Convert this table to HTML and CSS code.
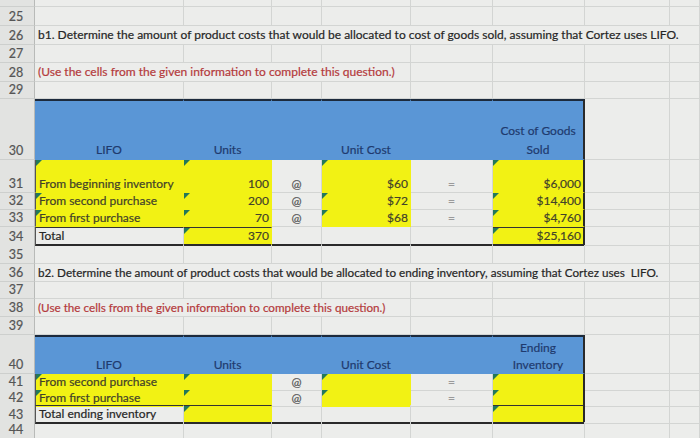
FILE: index.html
```html
<!DOCTYPE html>
<html>
<head>
<meta charset="utf-8">
<link rel="stylesheet" href="styles.css">
</head>
<body>
<div class="sheet">
  <div class="row h7"><div class="c rh"></div><div class="c"></div><div class="c"></div><div class="c"></div><div class="c"></div><div class="c"></div><div class="c"></div><div class="c"></div><div class="c"></div></div>
  <div class="row h19"><div class="c rh">25</div><div class="c"></div><div class="c"></div><div class="c"></div><div class="c"></div><div class="c"></div><div class="c"></div><div class="c"></div><div class="c"></div></div>
  <div class="row h19"><div class="c rh">26</div><div class="c ov"><span>b1. Determine the amount of product costs that would be allocated to cost of goods sold, assuming that Cortez uses LIFO.</span></div><div class="c"></div><div class="c"></div><div class="c"></div><div class="c"></div><div class="c"></div><div class="c"></div><div class="c"></div></div>
  <div class="row h18"><div class="c rh">27</div><div class="c"></div><div class="c"></div><div class="c"></div><div class="c"></div><div class="c"></div><div class="c"></div><div class="c"></div><div class="c"></div></div>
  <div class="row h19"><div class="c rh">28</div><div class="c ov red"><span>(Use the cells from the given information to complete this question.)</span></div><div class="c"></div><div class="c"></div><div class="c"></div><div class="c"></div><div class="c"></div><div class="c"></div><div class="c"></div></div>
  <div class="row h17"><div class="c rh">29</div><div class="c"></div><div class="c"></div><div class="c"></div><div class="c"></div><div class="c"></div><div class="c"></div><div class="c"></div><div class="c"></div></div>

  <div class="row h61"><div class="c rh">30</div><div class="c th">LIFO</div><div class="c th">Units</div><div class="c th"></div><div class="c th">Unit Cost</div><div class="c th"></div><div class="c th rb">Cost of Goods<br>Sold</div><div class="c"></div><div class="c"></div></div>
  <div class="row h33"><div class="c rh">31</div><div class="c y lb tri">From beginning inventory</div><div class="c y num tri">100</div><div class="c ctr at">@</div><div class="c y num tri">$60</div><div class="c ctr eq">=</div><div class="c y num tri rb">$6,000</div><div class="c"></div><div class="c"></div></div>
  <div class="row h17"><div class="c rh">32</div><div class="c y lb tri">From second purchase</div><div class="c y num tri">200</div><div class="c ctr at">@</div><div class="c y num tri">$72</div><div class="c ctr eq">=</div><div class="c y num tri rb">$14,400</div><div class="c"></div><div class="c"></div></div>
  <div class="row h17"><div class="c rh">33</div><div class="c y lb tri">From first purchase</div><div class="c y num tri">70</div><div class="c ctr at">@</div><div class="c y num tri">$68</div><div class="c ctr eq">=</div><div class="c y num tri rb">$4,760</div><div class="c"></div><div class="c"></div></div>
  <div class="row h18"><div class="c rh">34</div><div class="c lb tt bb">Total</div><div class="c y num tri tt bb">370</div><div class="c bb"></div><div class="c bb"></div><div class="c bb"></div><div class="c y num tri tt bb rb">$25,160</div><div class="c"></div><div class="c"></div></div>

  <div class="row h19"><div class="c rh">35</div><div class="c"></div><div class="c"></div><div class="c"></div><div class="c"></div><div class="c"></div><div class="c"></div><div class="c"></div><div class="c"></div></div>
  <div class="row h18"><div class="c rh">36</div><div class="c ov sm"><span>b2. Determine the amount of product costs that would be allocated to ending inventory, assuming that Cortez uses&nbsp; LIFO.</span></div><div class="c"></div><div class="c"></div><div class="c"></div><div class="c"></div><div class="c"></div><div class="c"></div><div class="c"></div></div>
  <div class="row h17"><div class="c rh">37</div><div class="c"></div><div class="c"></div><div class="c"></div><div class="c"></div><div class="c"></div><div class="c"></div><div class="c"></div><div class="c"></div></div>
  <div class="row h18"><div class="c rh">38</div><div class="c ov red sm"><span>(Use the cells from the given information to complete this question.)</span></div><div class="c"></div><div class="c"></div><div class="c"></div><div class="c"></div><div class="c"></div><div class="c"></div><div class="c"></div></div>
  <div class="row h18"><div class="c rh">39</div><div class="c"></div><div class="c"></div><div class="c"></div><div class="c"></div><div class="c"></div><div class="c"></div><div class="c"></div><div class="c"></div></div>

  <div class="row h39"><div class="c rh">40</div><div class="c th th2">LIFO</div><div class="c th th2">Units</div><div class="c th th2"></div><div class="c th th2">Unit Cost</div><div class="c th th2"></div><div class="c th th2 rb">Ending<br>Inventory</div><div class="c"></div><div class="c"></div></div>
  <div class="row h16"><div class="c rh">41</div><div class="c y lb tri">From second purchase</div><div class="c y num tri"></div><div class="c ctr at">@</div><div class="c y num tri"></div><div class="c ctr eq">=</div><div class="c y num tri rb"></div><div class="c"></div><div class="c"></div></div>
  <div class="row h15"><div class="c rh">42</div><div class="c y lb tri">From first purchase</div><div class="c y num tri"></div><div class="c ctr at">@</div><div class="c y num tri"></div><div class="c ctr eq">=</div><div class="c y num tri rb"></div><div class="c"></div><div class="c"></div></div>
  <div class="row h17"><div class="c rh">43</div><div class="c lb tt bb">Total ending inventory</div><div class="c y num tri tt bb"></div><div class="c bb"></div><div class="c bb"></div><div class="c bb"></div><div class="c y num tri tt bb rb"></div><div class="c"></div><div class="c"></div></div>
  <div class="row h16"><div class="c rh">44</div><div class="c"></div><div class="c"></div><div class="c"></div><div class="c"></div><div class="c"></div><div class="c"></div><div class="c"></div><div class="c"></div></div>
</div>
</body>
</html>
```
FILE: styles.css
```css
* { box-sizing: border-box; margin: 0; padding: 0; }
html, body { width: 700px; height: 438px; overflow: hidden; }
body {
  background: #ecedeb;
  font-family: Lato, "Open Sans", sans-serif;
  font-size: 12px;
  color: #262626;
  -webkit-text-stroke: 0.2px currentColor;
}
.sheet { display: flex; flex-direction: column; }
.row {
  display: grid;
  grid-template-columns: 35px 149px 88px 50px 89px 82px 92px 85px 1fr;
}
.h7 { height: 7px; }
.h15 { height: 15px; }
.h16 { height: 16px; }
.h17 { height: 17px; }
.h18 { height: 18px; }
.h19 { height: 19px; }
.h33 { height: 33px; }
.h39 { height: 39px; }
.h61 { height: 61px; }

.c {
  position: relative;
  display: flex;
  align-items: flex-end;
  padding: 0 3px 1px;
  line-height: 15px;
  white-space: nowrap;
  border-right: 1px solid #d3d5d3;
  border-bottom: 1px solid #d3d5d3;
}
.rh {
  background: #e2e3e1;
  justify-content: center;
  color: #555;
  font-size: 12.5px;
  padding-right: 5px;
  border-right: 1px solid #b8bab8;
  border-bottom-color: #cdcfcd;
}
.ov { z-index: 1; padding-bottom: 0; }
.ov span {
  display: inline-block;
  height: 18px;
  line-height: 18px;
  padding-right: 2px;
  background: #ecedeb;
}
.ov.sm span { height: 17px; line-height: 17px; font-size: 11.7px; }
.red { color: #b43a3c; }

.th {
  background: #5a96d6;
  border-top: 2px solid #1c2a3c;
  border-right-color: #5a96d6;
  border-bottom-color: #5a96d6;
  color: #1f3a6e;
  justify-content: center;
  text-align: center;
  line-height: 19px;
  padding-bottom: 0;
}
.th2 { line-height: 17px; }
.y {
  background: #f2f214;
  border-right-color: #f2f214;
  border-bottom-color: #f2f214;
  color: #42422a;
}
.num { justify-content: flex-end; padding-right: 2px; }
.ctr { justify-content: center; }
.at { color: #555; }
.eq { color: #9a9a9a; }
.tri::before {
  content: "";
  position: absolute;
  left: 0;
  top: 0;
  border-top: 6px solid #23785a;
  border-right: 6px solid transparent;
}
.tt { border-top: 1px solid #333; }
.bb { border-bottom: 2px solid #2a2a2a; }
.rb { border-right: 2px solid #2a2a2a; }
.lb { border-left: 1px solid #555; }
```
